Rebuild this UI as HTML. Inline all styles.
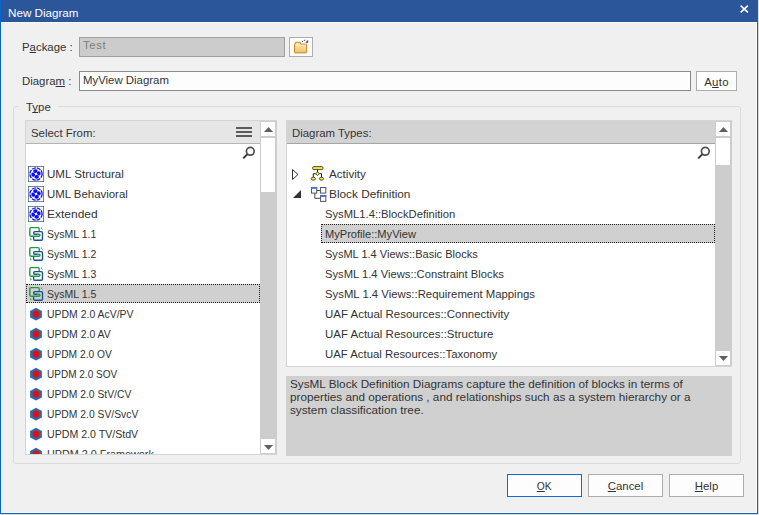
<!DOCTYPE html>
<html><head><meta charset="utf-8">
<style>
*{box-sizing:border-box;margin:0;padding:0}
html,body{width:759px;height:515px;overflow:hidden;background:#dcdcdc}
body{position:relative;font-family:"Liberation Sans",sans-serif;font-size:11.4px;color:#333}
.a{position:absolute}
.t{position:absolute;white-space:pre;line-height:14px}
#win{left:0;top:0;width:758px;height:514px;background:#0b63ce}
#title{left:1px;top:0;width:756px;height:22px;background:#2b579a}
#title .tt{left:7px;top:6px;color:#fff;font-size:11.65px}
#body{left:1px;top:22px;width:756px;height:491px;background:#f0f0f0;border-left:1px solid #fcfbf8;border-bottom:1px solid #fcfbf8;border-right:1px solid #fcfbf8;border-top:1px solid #fcfbf8}
.box{position:absolute;border:1px solid #a6a6a6;background:#fff}
.btn{position:absolute;border:1px solid #adadad;background:#fdfdfd;text-align:center;line-height:23px}
u{text-decoration:underline;text-decoration-thickness:1px;text-underline-offset:0.5px;text-decoration-skip-ink:none}
.panel{position:absolute;border:1px solid #d5d5d5;background:#fff;overflow:hidden}
.hdr{position:absolute;left:0;top:0;height:23px;border-bottom:1px solid #b4b4b4}
.sb{position:absolute;top:0;width:17px;background:#cdcdcd}
.sbb{position:absolute;left:1px;width:14px;background:#fff}
.tri-up{position:absolute;width:0;height:0;border-left:4.5px solid transparent;border-right:4.5px solid transparent;border-bottom:5px solid #606060}
.tri-dn{position:absolute;width:0;height:0;border-left:4.5px solid transparent;border-right:4.5px solid transparent;border-top:5px solid #606060}
.item{position:absolute;left:0;height:20px;white-space:pre}
.item svg{position:absolute;left:3px;top:0}
.item span{position:absolute;left:22px;top:3px;line-height:14px}
</style></head><body>
<svg width="0" height="0" style="position:absolute">
<defs>
<symbol id="uml" viewBox="0 0 16 16">
<rect x="0.5" y="0.5" width="15" height="15" fill="#fff" stroke="#6f86a3" stroke-width="1"/>
<rect x="0" y="0" width="1" height="1" fill="#128080"/><rect x="15" y="0" width="1" height="1" fill="#128080"/><rect x="0" y="15" width="1" height="1" fill="#128080"/><rect x="15" y="15" width="1" height="1" fill="#128080"/>
<circle cx="8" cy="8" r="6.1" fill="none" stroke="#0c0cff" stroke-width="1.3" stroke-dasharray="3.9 0.9"/>
<g fill="#0c0cff" transform="rotate(-12 8 8)">
<ellipse cx="8" cy="5.1" rx="2.2" ry="1.85"/><ellipse cx="10.9" cy="8" rx="1.85" ry="2.2"/><ellipse cx="8" cy="10.9" rx="2.2" ry="1.85"/><ellipse cx="5.1" cy="8" rx="1.85" ry="2.2"/>
</g>
</symbol>
<symbol id="sysml" viewBox="0 0 16 16">
<path d="M6 10.3 H3 Q1.8 10.3 1.8 9.1 V2.8 Q1.8 1.6 3 1.6 H10 Q11.2 1.6 11.2 2.8 V5" fill="none" stroke="#1e9b3c" stroke-width="1.4"/>
<path d="M5.6 10.6 V13 Q5.6 14.3 6.9 14.3 H13.2 Q14.5 14.3 14.5 13 V6.9 Q14.5 5.6 13.2 5.6 H6.9 Q5.6 5.6 5.6 6.9 V7 Q5.6 8.3 6.9 8.3 H9.6" fill="none" stroke="#1f4f92" stroke-width="1.4"/>
<path d="M5.5 10.3 H10.8 Q12 10.3 12 9.3 Q12 8.3 10.8 8.3 H9.4" fill="none" stroke="#1e9b3c" stroke-width="1.4"/>
<circle cx="13.4" cy="2.1" r="0.7" fill="#3b5fa5"/><circle cx="14.6" cy="3.6" r="0.55" fill="#8aa5d5"/>
<path d="M1.8 11.5 L4 13.8 L2.3 14.4 Z" fill="#4aa865"/>
</symbol>
<symbol id="updm" viewBox="0 0 16 16">
<polygon points="8,1.8 13.9,5 13.9,11.4 8,14.6 2.1,11.4 2.1,5" fill="#2f69a7"/>
<polygon points="8,4.2 11.2,6 11.2,10.2 8,12 4.8,10.2 4.8,6" fill="#dc1212"/>
</symbol>
</defs></svg>
<div id="win" class="a"></div>
<div id="title" class="a"><div class="t tt">New Diagram</div>
<svg class="a" style="left:737px;top:4px" width="12" height="11" viewBox="0 0 12 11"><path d="M2.6 1.6 L9.9 8.4 M9.9 1.6 L2.6 8.4" stroke="#fff" stroke-width="1.6"/></svg>
</div>
<div id="body" class="a"></div>

<!-- Package -->
<div class="t" style="left:22px;top:40px">P<u>a</u>ckage :</div>
<div class="box" style="left:79px;top:37px;width:206px;height:20px;background:#cccccc;border-color:#a0a0a0"></div>
<div class="t" style="left:83px;top:38px;color:#7d7d7d;letter-spacing:0.6px">Test</div>
<div class="btn" style="left:289px;top:37px;width:24px;height:20px"></div>

<!-- Diagram -->
<div class="t" style="left:22px;top:74px">Diagra<u>m</u> :</div>
<div class="box" style="left:79px;top:71px;width:612px;height:20px;border-color:#8a8a8a;background:#fdfdfd"></div>
<div class="t" style="left:83px;top:73px">MyView Diagram</div>
<div class="btn" style="left:696px;top:71px;width:41px;height:20px;line-height:20px;letter-spacing:0.3px">A<u>u</u>to</div>

<!-- Group box -->
<div class="a" style="left:13px;top:106px;width:728px;height:358px;border:1px solid #dcdcdc;border-radius:3px"></div>
<div class="a" style="left:19px;top:100px;width:39px;height:12px;background:#f0f0f0"></div>
<div class="t" style="left:26px;top:100px">T<u>y</u>pe</div>

<!-- Left panel -->
<div class="panel" style="left:25px;top:120px;width:252px;height:335px;border-right:0">
  <div class="a" style="left:0px;top:163px;width:234px;height:19px;background:#d0d0d0;border:1px dotted #222"></div>
<svg class="a" style="left:2px;top:45px" width="16" height="16"><use href="#uml"/></svg><div class="t" style="left:21px;top:46px;transform:scaleX(1.0174);transform-origin:0 0">UML Structural</div>
<svg class="a" style="left:2px;top:65px" width="16" height="16"><use href="#uml"/></svg><div class="t" style="left:21px;top:66px;transform:scaleX(1.0025);transform-origin:0 0">UML Behavioral</div>
<svg class="a" style="left:2px;top:85px" width="16" height="16"><use href="#uml"/></svg><div class="t" style="left:21px;top:86px;transform:scaleX(1.0515);transform-origin:0 0">Extended</div>
<svg class="a" style="left:2px;top:105px" width="16" height="16"><use href="#sysml"/></svg><div class="t" style="left:21px;top:106px;transform:scaleX(0.9221);transform-origin:0 0">SysML 1.1</div>
<svg class="a" style="left:2px;top:125px" width="16" height="16"><use href="#sysml"/></svg><div class="t" style="left:21px;top:126px;transform:scaleX(0.9221);transform-origin:0 0">SysML 1.2</div>
<svg class="a" style="left:2px;top:145px" width="16" height="16"><use href="#sysml"/></svg><div class="t" style="left:21px;top:146px;transform:scaleX(0.9221);transform-origin:0 0">SysML 1.3</div>
<svg class="a" style="left:2px;top:165px" width="16" height="16"><use href="#sysml"/></svg><div class="t" style="left:21px;top:166px;transform:scaleX(0.9221);transform-origin:0 0">SysML 1.5</div>
<svg class="a" style="left:2px;top:185px" width="16" height="16"><use href="#updm"/></svg><div class="t" style="left:21px;top:186px;transform:scaleX(0.9177);transform-origin:0 0">UPDM 2.0 AcV/PV</div>
<svg class="a" style="left:2px;top:205px" width="16" height="16"><use href="#updm"/></svg><div class="t" style="left:21px;top:206px;transform:scaleX(0.9184);transform-origin:0 0">UPDM 2.0 AV</div>
<svg class="a" style="left:2px;top:225px" width="16" height="16"><use href="#updm"/></svg><div class="t" style="left:21px;top:226px;transform:scaleX(0.898);transform-origin:0 0">UPDM 2.0 OV</div>
<svg class="a" style="left:2px;top:245px" width="16" height="16"><use href="#updm"/></svg><div class="t" style="left:21px;top:246px;transform:scaleX(0.8794);transform-origin:0 0">UPDM 2.0 SOV</div>
<svg class="a" style="left:2px;top:265px" width="16" height="16"><use href="#updm"/></svg><div class="t" style="left:21px;top:266px;transform:scaleX(0.906);transform-origin:0 0">UPDM 2.0 StV/CV</div>
<svg class="a" style="left:2px;top:285px" width="16" height="16"><use href="#updm"/></svg><div class="t" style="left:21px;top:286px;transform:scaleX(0.9076);transform-origin:0 0">UPDM 2.0 SV/SvcV</div>
<svg class="a" style="left:2px;top:305px" width="16" height="16"><use href="#updm"/></svg><div class="t" style="left:21px;top:306px;transform:scaleX(0.9314);transform-origin:0 0">UPDM 2.0 TV/StdV</div>
<svg class="a" style="left:2px;top:325px" width="16" height="16"><use href="#updm"/></svg><div class="t" style="left:21px;top:326px;transform:scaleX(0.948);transform-origin:0 0">UPDM 2.0 Framework</div>
<div class="hdr" style="width:235px;background:#e6e6e6"></div>
  <div class="t" style="left:5px;top:5px">Select From:</div>
  <div class="sb" style="left:234px;height:333px">
    <div class="sbb" style="top:1px;height:14px"></div>
    <div class="sbb" style="top:17px;height:54px"></div>
    <div class="sbb" style="top:318px;height:14px"></div>
  </div>
</div>

<!-- Right panel -->
<div class="panel" style="left:286px;top:120px;width:446px;height:247px;border-right:0">
  <div class="hdr" style="width:429px;background:#d3d3d3;border-bottom-color:#a6a6a6"></div>
  <div class="t" style="left:5px;top:5px">Diagram Types:</div>
  <div class="sb" style="left:428px;height:245px">
    <div class="sbb" style="top:1px;height:14px"></div>
    <div class="sbb" style="top:17px;height:27px"></div>
    <div class="sbb" style="top:230px;height:14px"></div>
  </div>
</div>



<!-- tree -->
<svg class="a" style="left:291px;top:168px" width="9" height="13"><path d="M1.5 1.5 L7 6.5 L1.5 11.5 Z" fill="none" stroke="#333" stroke-width="1"/></svg>
<svg class="a" style="left:292px;top:189px" width="10" height="10"><path d="M9 1 V9 H1 Z" fill="#333"/></svg>
<svg class="a" style="left:310px;top:165px" width="16" height="16" viewBox="0 0 16 16">
<path d="M7.5 4 V7 M5.7 8.7 H3.3 V12.3 M9.3 8.7 H11.5 V12.3" fill="none" stroke="#1e1e1e" stroke-width="1"/>
<rect x="2.6" y="1.6" width="10.4" height="3" rx="1.2" fill="#f2ee22" stroke="#3a3a46" stroke-width="0.9"/>
<path d="M7.5 6.8 L9.4 8.7 L7.5 10.6 L5.6 8.7 Z" fill="#f2ee22" stroke="#2a2a2a" stroke-width="0.8"/>
<ellipse cx="3.3" cy="13.7" rx="2.1" ry="1.5" fill="#f2ee22" stroke="#3a3a46" stroke-width="0.9"/>
<ellipse cx="11.5" cy="13.7" rx="2.1" ry="1.5" fill="#f2ee22" stroke="#3a3a46" stroke-width="0.9"/>
</svg>
<svg class="a" style="left:310px;top:186px" width="17" height="17" viewBox="0 0 17 17">
<path d="M6.5 4.5 H10.5 M4.8 7 V12.3 H10.5" fill="none" stroke="#444" stroke-width="1"/>
<rect x="1.5" y="1.5" width="5.2" height="5.6" fill="#fff" stroke="#555" stroke-width="1"/>
<rect x="10.6" y="1.5" width="5.2" height="5.6" fill="#fff" stroke="#555" stroke-width="1"/>
<rect x="10.6" y="9.6" width="5.2" height="5.8" fill="#fff" stroke="#555" stroke-width="1"/>
<rect x="1" y="1" width="6.2" height="1.8" fill="#3c6fd6"/>
<rect x="10.1" y="9.1" width="6.2" height="1.8" fill="#3c6fd6"/>
</svg>
<div class="t" style="left:329px;top:167px;transform:scaleX(1.0223);transform-origin:0 0">Activity</div>
<div class="t" style="left:329px;top:187px;transform:scaleX(1.0373);transform-origin:0 0">Block Definition</div>
<div class="a" style="left:321px;top:224px;width:394px;height:19px;background:#d0d0d0;border:1px dotted #222"></div>
<div class="t" style="left:325px;top:207px;transform:scaleX(0.9848);transform-origin:0 0">SysML1.4::BlockDefinition</div>
<div class="t" style="left:325px;top:227px;transform:scaleX(0.9732);transform-origin:0 0">MyProfile::MyView</div>
<div class="t" style="left:325px;top:247px;transform:scaleX(0.9687);transform-origin:0 0">SysML 1.4 Views::Basic Blocks</div>
<div class="t" style="left:325px;top:267px;transform:scaleX(0.9845);transform-origin:0 0">SysML 1.4 Views::Constraint Blocks</div>
<div class="t" style="left:325px;top:287px;transform:scaleX(0.9957);transform-origin:0 0">SysML 1.4 Views::Requirement Mappings</div>
<div class="t" style="left:325px;top:307px;transform:scaleX(1.0071);transform-origin:0 0">UAF Actual Resources::Connectivity</div>
<div class="t" style="left:325px;top:327px;transform:scaleX(1.0078);transform-origin:0 0">UAF Actual Resources::Structure</div>
<div class="t" style="left:325px;top:347px;transform:scaleX(0.9965);transform-origin:0 0">UAF Actual Resources::Taxonomy</div>

<!-- scroll arrows -->
<svg class="a" style="left:263px;top:126px" width="11" height="7"><path d="M1 6 L5.5 1 L10 6 Z" fill="#606060"/></svg>
<svg class="a" style="left:263px;top:444px" width="11" height="7"><path d="M1 1 L5.5 6 L10 1 Z" fill="#606060"/></svg>
<svg class="a" style="left:718px;top:126px" width="11" height="7"><path d="M1 6 L5.5 1 L10 6 Z" fill="#606060"/></svg>
<svg class="a" style="left:718px;top:355px" width="11" height="7"><path d="M1 1 L5.5 6 L10 1 Z" fill="#606060"/></svg>
<!-- hamburger -->
<div class="a" style="left:236px;top:127px;width:16px;height:2px;background:#5c5c5c"></div>
<div class="a" style="left:236px;top:131px;width:16px;height:2px;background:#5c5c5c"></div>
<div class="a" style="left:236px;top:135px;width:16px;height:2px;background:#5c5c5c"></div>
<!-- magnifiers -->
<svg class="a" style="left:240px;top:146px" width="16" height="16"><circle cx="10.3" cy="5.3" r="3.9" fill="none" stroke="#505050" stroke-width="1.7"/><path d="M7.5 8.1 L3.2 12.4" stroke="#383838" stroke-width="2"/></svg>
<svg class="a" style="left:695px;top:146px" width="16" height="16"><circle cx="10.3" cy="5.3" r="3.9" fill="none" stroke="#505050" stroke-width="1.7"/><path d="M7.5 8.1 L3.2 12.4" stroke="#383838" stroke-width="2"/></svg>
<!-- folder icon -->
<svg class="a" style="left:289px;top:37px" width="24" height="20" viewBox="0 0 24 20">
<defs><linearGradient id="fg" x1="0" y1="0" x2="0" y2="1"><stop offset="0" stop-color="#fde9b0"/><stop offset="1" stop-color="#efc46c"/></linearGradient></defs>
<path d="M5.5 15.2 V7.2 H6.2 V5.9 Q6.2 5.3 6.8 5.3 H11 Q11.6 5.3 11.6 5.9 V7.2 H17.6 V15.2 Q17.6 15.9 16.9 15.9 H6.2 Q5.5 15.9 5.5 15.2 Z" fill="url(#fg)" stroke="#c8862a" stroke-width="1"/>
<path d="M6.3 8.3 H16.9" stroke="#fff4d0" stroke-width="0.8"/>
<path d="M13 4.6 L14.2 4 M15 3.5 L16.3 3.1" stroke="#3d4a8c" stroke-width="1"/>
<path d="M19.2 2.8 V5.8 H16.2 Z" fill="#3d4a8c"/>
</svg>

<!-- Description -->
<div class="a" style="left:286px;top:376px;width:446px;height:80px;background:#d0d0d0"></div>
<div class="t" style="left:290px;top:377px;line-height:13px;font-size:11.74px">SysML Block Definition Diagrams capture the definition of blocks in terms of
properties and operations , and relationships such as a system hierarchy or a
system classification tree.</div>

<!-- Buttons -->
<div class="btn" style="left:507px;top:474px;width:75px;height:23px;border-color:#0f6bd6"><span style="display:inline-block;transform:scaleX(0.9)"><u>O</u>K</span></div>
<div class="btn" style="left:588px;top:474px;width:75px;height:23px"><u>C</u>ancel</div>
<div class="btn" style="left:669px;top:474px;width:75px;height:23px"><u>H</u>elp</div>
</body></html>
